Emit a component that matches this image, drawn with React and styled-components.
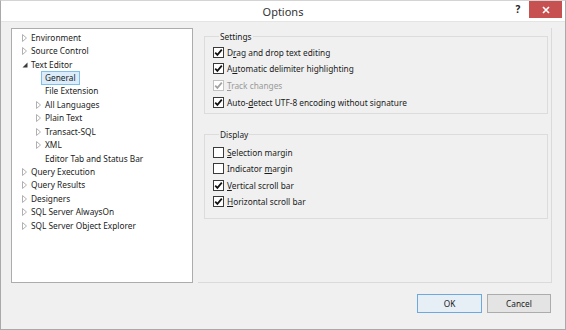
import React from "react";
import styled, { createGlobalStyle } from "styled-components";

const Global = createGlobalStyle`
  html, body { margin: 0; padding: 0; background: #f0f0f0; }
  body { font-family: "Noto Sans", "Open Sans", sans-serif; }
  * { box-sizing: border-box; }
`;

const Window = styled.div`
  width: 566px;
  height: 330px;
  background: #f0f0f0;
  border: 1px solid #a9a9a9;
  border-top-color: #d4d4d4;
  display: flex;
  flex-direction: column;
  font-family: "Noto Sans", "Open Sans", sans-serif;
  font-size: 8.3px;
  color: #1b1b1b;
`;

const TitleBar = styled.div`
  height: 21px;
  flex: none;
  background: #ffffff;
  border-bottom: 1px solid #e4e4e4;
  display: flex;
  align-items: flex-start;
`;

const Title = styled.div`
  flex: 1;
  text-align: center;
  font-size: 11px;
  line-height: 22px;
  color: #333;
  padding-left: 58px;
`;

const HelpMark = styled.div`
  width: 22px;
  font-size: 10px;
  font-weight: 700;
  line-height: 16px;
  color: #222;
  text-align: center;
`;

const CloseBtn = styled.div`
  width: 33px;
  height: 17px;
  margin-right: 3px;
  background: #c75050;
  color: #fff;
  display: flex;
  align-items: center;
  justify-content: center;
`;

const Body = styled.div`
  flex: 1;
  display: flex;
  flex-direction: column;
  padding: 6px 13px 0 10px;
`;

const Content = styled.div`
  height: 255px;
  display: flex;
  gap: 5px;
`;

const TreePanel = styled.div`
  width: 182px;
  background: #fff;
  border: 1px solid #acacac;
  padding-top: 2px;
`;

const Row = styled.div`
  height: 13.43px;
  display: flex;
  align-items: center;
  padding-left: ${(p) => 10 + p.$level * 14}px;
  white-space: nowrap;
`;

const ArrowSlot = styled.span`
  width: 9px;
  flex: none;
  display: flex;
  align-items: center;
`;

const NodeLabel = styled.span`
  margin-left: -4px;
  padding: 0 3px;
  height: 14px;
  line-height: 12px;
  border: 1px solid ${(p) => (p.$selected ? "#7fc0ea" : "transparent")};
  background: ${(p) => (p.$selected ? "#dbedfb" : "transparent")};
`;

const PagePanel = styled.div`
  flex: 1;
  border-right: 1px solid #dadada;
  border-bottom: 1px solid #dadada;
  padding: 2px 3px 0 6px;
`;

const Group = styled.fieldset`
  margin: ${(p) => p.$mt}px 0 0 0;
  border: 1px solid #dcdcdc;
  padding: ${(p) => p.$pt}px 0 ${(p) => p.$pb}px 8px;
  min-width: 0;
`;

const Legend = styled.legend`
  padding: 0 1px;
  margin-left: 6px;
  line-height: 13px;
`;

const CheckRow = styled.div`
  height: ${(p) => p.$h}px;
  display: flex;
  align-items: center;
  gap: 3px;
  color: ${(p) => (p.$disabled ? "#9a9a9a" : "#1b1b1b")};
  white-space: nowrap;
`;

const Box = styled.span`
  width: 11px;
  height: 11px;
  flex: none;
  border: 1px solid ${(p) => (p.$disabled ? "#c2c2c2" : "#3a3a3a")};
  background: #fff;
  display: flex;
  align-items: center;
  justify-content: center;
`;

const Key = styled.span`
  text-decoration: underline;
`;

const ButtonRow = styled.div`
  display: flex;
  justify-content: flex-end;
  gap: 5px;
  margin-top: 11px;
  padding-right: 1px;
`;

const Button = styled.div`
  width: ${(p) => p.$w}px;
  height: 19px;
  display: flex;
  align-items: center;
  justify-content: center;
  border: 1px solid ${(p) => (p.$default ? "#6fa8dc" : "#acacac")};
  background: ${(p) => (p.$default ? "#e6eef6" : "#e4e4e4")};
  color: #1b1b1b;
`;

const ClosedArrow = () => (
  <svg width="6" height="8" viewBox="0 0 6 8">
    <path d="M0.5 0.5 L4.5 4 L0.5 7.5 Z" fill="#fff" stroke="#b0b0b0" strokeWidth="1" />
  </svg>
);

const OpenArrow = () => (
  <svg width="6" height="6" viewBox="0 0 6 6">
    <path d="M5.5 0.5 L5.5 5.5 L0.5 5.5 Z" fill="#3a3a3a" />
  </svg>
);

const Check = ({ color }) => (
  <svg width="9" height="9" viewBox="0 0 9 9">
    <path d="M1.2 4.6 L3.4 6.9 L7.8 1.6" fill="none" stroke={color} strokeWidth="1.7" />
  </svg>
);

const tree = [
  { t: "Environment", l: 0, a: "closed" },
  { t: "Source Control", l: 0, a: "closed" },
  { t: "Text Editor", l: 0, a: "open" },
  { t: "General", l: 1, sel: true },
  { t: "File Extension", l: 1 },
  { t: "All Languages", l: 1, a: "closed" },
  { t: "Plain Text", l: 1, a: "closed" },
  { t: "Transact-SQL", l: 1, a: "closed" },
  { t: "XML", l: 1, a: "closed" },
  { t: "Editor Tab and Status Bar", l: 1 },
  { t: "Query Execution", l: 0, a: "closed" },
  { t: "Query Results", l: 0, a: "closed" },
  { t: "Designers", l: 0, a: "closed" },
  { t: "SQL Server AlwaysOn", l: 0, a: "closed" },
  { t: "SQL Server Object Explorer", l: 0, a: "closed" },
];

const CheckItem = ({ checked, disabled, pre, k, post, h }) => (
  <CheckRow $disabled={disabled} $h={h}>
    <Box $disabled={disabled}>{checked && <Check color={disabled ? "#a3a3a3" : "#111"} />}</Box>
    <span>
      {pre}
      <Key>{k}</Key>
      {post}
    </span>
  </CheckRow>
);

export default function App() {
  return (
    <>
      <Global />
      <Window>
        <TitleBar>
          <Title>Options</Title>
          <HelpMark>?</HelpMark>
          <CloseBtn>
            <svg width="8" height="8" viewBox="0 0 8 8">
              <path d="M1 1 L7 7 M7 1 L1 7" stroke="#fff" strokeWidth="1.6" />
            </svg>
          </CloseBtn>
        </TitleBar>
        <Body>
          <Content>
            <TreePanel>
              {tree.map((n) => (
                <Row key={n.t} $level={n.l}>
                  <ArrowSlot>
                    {n.a === "closed" && <ClosedArrow />}
                    {n.a === "open" && <OpenArrow />}
                  </ArrowSlot>
                  <NodeLabel $selected={n.sel}>{n.t}</NodeLabel>
                </Row>
              ))}
            </TreePanel>
            <PagePanel>
              <Group $mt={0} $pt={1} $pb={3}>
                <Legend>Settings</Legend>
                <CheckItem h={16.6} checked pre="D" k="r" post="ag and drop text editing" />
                <CheckItem h={16.6} checked pre="A" k="u" post="tomatic delimiter highlighting" />
                <CheckItem h={16.6} checked disabled pre="" k="T" post="rack changes" />
                <CheckItem h={16.6} checked pre="Auto-" k="d" post="etect UTF-8 encoding without signature" />
              </Group>
              <Group $mt={14} $pt={3} $pb={8}>
                <Legend>Display</Legend>
                <CheckItem h={16.4} pre="" k="S" post="election margin" />
                <CheckItem h={16.4} pre="Indicator " k="m" post="argin" />
                <CheckItem h={16.4} checked pre="" k="V" post="ertical scroll bar" />
                <CheckItem h={16.4} checked pre="" k="H" post="orizontal scroll bar" />
              </Group>
            </PagePanel>
          </Content>
          <ButtonRow>
            <Button $default $w={65}>OK</Button>
            <Button $w={64}>Cancel</Button>
          </ButtonRow>
        </Body>
      </Window>
    </>
  );
}
